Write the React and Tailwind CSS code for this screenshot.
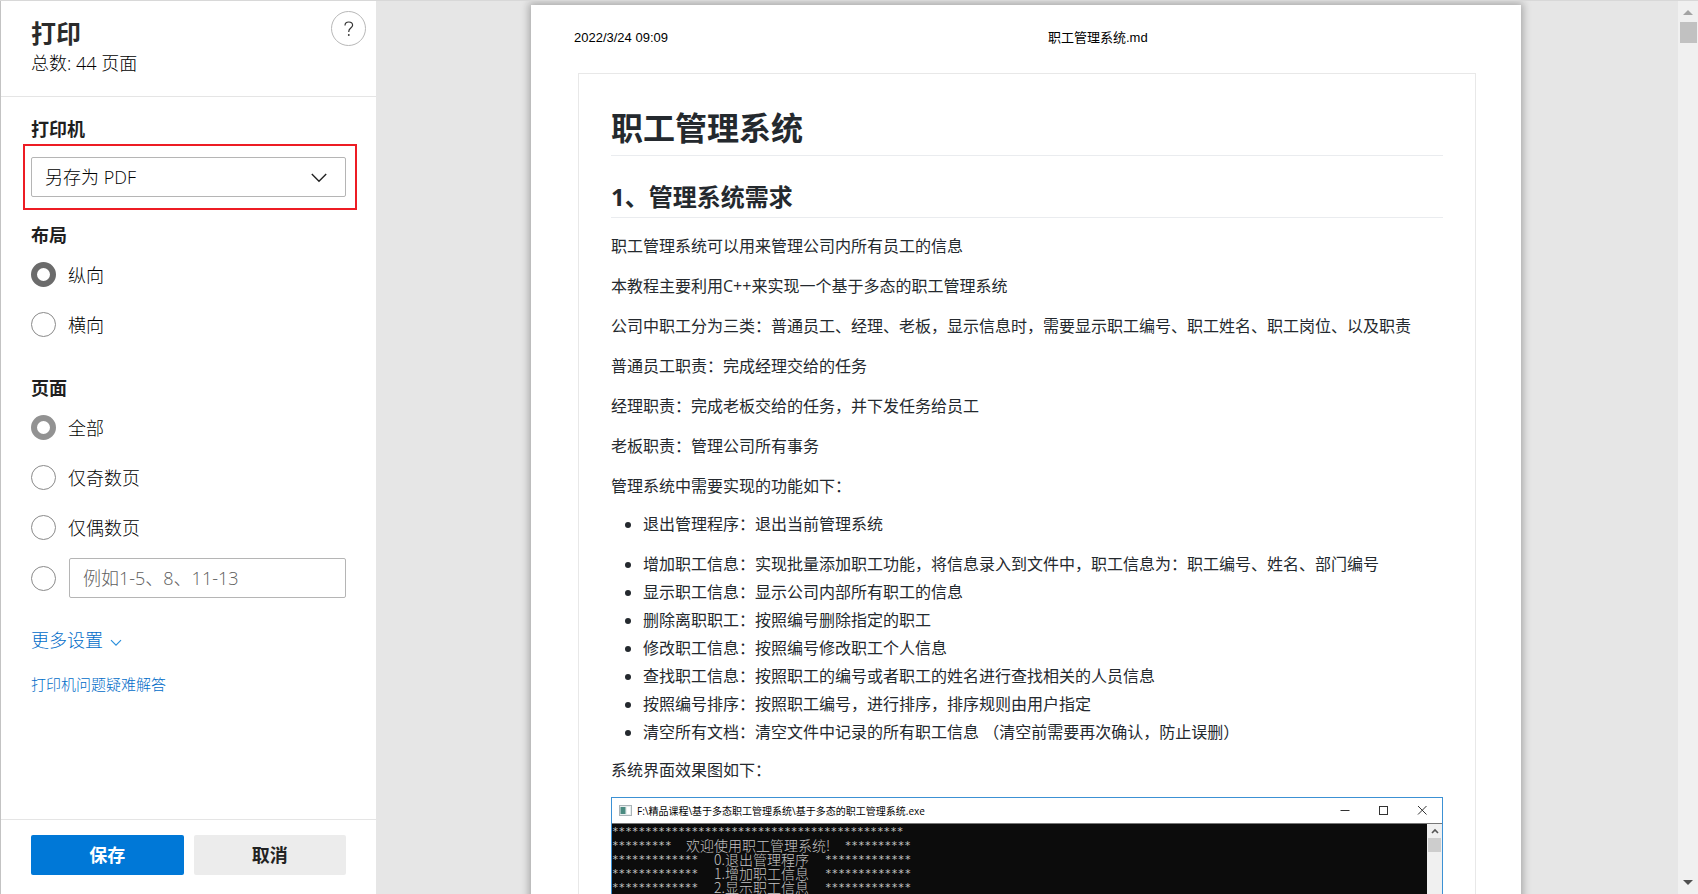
const SIDE_FONT = "font-['Open_Sans','Noto_Sans_CJK_SC',sans-serif]";

function Radio({ id, name, label, defaultChecked, tone = "border-[#6b6b6b]" }) {
  return (
    <div className="flex h-[25px] items-center gap-3">
      <input
        type="radio"
        id={id}
        name={name}
        defaultChecked={defaultChecked}
        className={`size-[25px] shrink-0 appearance-none rounded-full border bg-white ${tone}`}
      />
      <label htmlFor={id} className="text-[18px] leading-6">
        {label}
      </label>
    </div>
  );
}

function Sidebar() {
  return (
    <form
      onSubmit={(e) => e.preventDefault()}
      className={`flex w-[376px] shrink-0 flex-col border-l border-[#c3c3c3] bg-white font-light text-black ${SIDE_FONT}`}
    >
      <header className="flex h-24 shrink-0 items-start justify-between border-b border-[#e5e5e5] pl-[30px] pr-[10px] pt-[10px]">
        <div className="pt-1.5">
          <h1 className="text-[25px] font-bold leading-8 text-[#2b2b2b]">打印</h1>
          <p className="text-[18px] leading-7">总数: 44 页面</p>
        </div>
        <button
          type="button"
          aria-label="帮助"
          className="flex size-[35px] items-center justify-center rounded-full border border-[#b8b8b8]"
        >
          <svg width="10" height="16" viewBox="0 0 10 16" fill="none" stroke="#333" strokeWidth="1.2">
            <path d="M1 4.6C1 2.3 2.6 1 4.8 1S8.6 2.4 8.6 4.3C8.6 6.9 4.8 7.3 4.8 10.2V11" />
            <circle cx="4.8" cy="14" r="0.9" fill="#333" stroke="none" />
          </svg>
        </button>
      </header>

      <div className="flex min-h-0 flex-1 flex-col overflow-hidden px-[30px] pt-5">
        <label htmlFor="printer" className="text-[18px] font-bold leading-6 text-[#1f1f1f]">
          打印机
        </label>
        <div className="-ml-2 -mr-[11px] mt-[3px] border-2 border-[#ed1c24] py-[11px] pl-1.5 pr-[9px]">
          <div className="grid items-center">
            <select
              id="printer"
              className="col-start-1 row-start-1 h-10 w-full appearance-none rounded-xs border border-[#b5b5b5] bg-white pl-[13px] text-[18px]"
            >
              <option>另存为 PDF</option>
            </select>
            <svg
              className="pointer-events-none col-start-1 row-start-1 mr-[19px] mt-0.5 justify-self-end"
              width="16"
              height="10"
              viewBox="0 0 16 10"
              fill="none"
              stroke="#222"
              strokeWidth="1.4"
            >
              <path d="M0.8 1L8 8.2L15.2 1" />
            </svg>
          </div>
        </div>

        <fieldset className="mt-[13px]">
          <legend className="text-[18px] font-bold leading-6 text-[#1f1f1f]">布局</legend>
          <div className="mt-[15px] flex flex-col gap-[25px]">
            <Radio id="portrait" name="layout" label="纵向" defaultChecked tone="border-[#767676] checked:border-[6px] checked:border-[#6b6b6b]" />
            <Radio id="landscape" name="layout" label="横向" tone="border-[#8a8a8a] checked:border-[6px]" />
          </div>
        </fieldset>

        <fieldset className="mt-[39px]">
          <legend className="text-[18px] font-bold leading-6 text-[#1f1f1f]">页面</legend>
          <div className="mt-[15px] flex flex-col gap-[25px]">
            <Radio id="all" name="pages" label="全部" defaultChecked tone="border-[#8a8a8a] checked:border-[6px] checked:border-[#929292]" />
            <Radio id="odd" name="pages" label="仅奇数页" tone="border-[#8a8a8a] checked:border-[6px]" />
            <Radio id="even" name="pages" label="仅偶数页" tone="border-[#8a8a8a] checked:border-[6px]" />
          </div>
          <div className="mt-[18px] flex items-center gap-[13px]">
            <input
              type="radio"
              name="pages"
              aria-label="自定义页面范围"
              className="size-[25px] shrink-0 appearance-none rounded-full border border-[#8a8a8a] bg-white checked:border-[6px]"
            />
            <input
              type="text"
              aria-label="页面范围"
              placeholder="例如1-5、8、11-13"
              className="h-10 min-w-0 flex-1 rounded-xs border border-[#b5b5b5] px-[13px] text-[18px] placeholder:text-[#606060]"
            />
          </div>
        </fieldset>

        <button type="button" className="mt-[30px] flex items-center gap-[7px] self-start text-[18px] leading-6 text-[#006cc8]">
          更多设置
          <svg className="mt-1.5" width="12" height="8" viewBox="0 0 12 8" fill="none" stroke="#2b8fdc" strokeWidth="1.2">
            <path d="M1 1.2L6 6.2L11 1.2" />
          </svg>
        </button>
        <a href="#troubleshoot" className="mt-5 self-start text-[15px] leading-6 text-[#006cc8]">
          打印机问题疑难解答
        </a>
      </div>

      <footer className="flex shrink-0 gap-2.5 border-t border-[#e5e5e5] px-[30px] pb-[19px] pt-[15px]">
        <button type="submit" className="h-10 flex-1 rounded-xs bg-[#0078d7] text-[18px] font-bold text-white">
          保存
        </button>
        <button type="button" className="h-10 flex-1 rounded-xs bg-[#ececec] text-[18px] font-bold text-[#222]">
          取消
        </button>
      </footer>
    </form>
  );
}

const INTRO = [
  "职工管理系统可以用来管理公司内所有员工的信息",
  "本教程主要利用C++来实现一个基于多态的职工管理系统",
  "公司中职工分为三类：普通员工、经理、老板，显示信息时，需要显示职工编号、职工姓名、职工岗位、以及职责",
  "普通员工职责：完成经理交给的任务",
  "经理职责：完成老板交给的任务，并下发任务给员工",
  "老板职责：管理公司所有事务",
  "管理系统中需要实现的功能如下：",
];

const FEATURES = [
  "退出管理程序：退出当前管理系统",
  "增加职工信息：实现批量添加职工功能，将信息录入到文件中，职工信息为：职工编号、姓名、部门编号",
  "显示职工信息：显示公司内部所有职工的信息",
  "删除离职职工：按照编号删除指定的职工",
  "修改职工信息：按照编号修改职工个人信息",
  "查找职工信息：按照职工的编号或者职工的姓名进行查找相关的人员信息",
  "按照编号排序：按照职工编号，进行排序，排序规则由用户指定",
  "清空所有文档：清空文件中记录的所有职工信息 （清空前需要再次确认，防止误删）",
];

const CONSOLE_ROWS = [
  { left: 9, text: "欢迎使用职工管理系统!", right: 10 },
  { left: 13, text: "0.退出管理程序", right: 13 },
  { left: 13, text: "1.增加职工信息", right: 13 },
  { left: 13, text: "2.显示职工信息", right: 13 },
  { left: 13, text: "3.删除离职职工", right: 13 },
];

function Stars({ count }) {
  return <span className="pt-0.5 font-['DejaVu_Sans_Mono',monospace] text-[11px] leading-3">{"*".repeat(count)}</span>;
}

function ConsoleWindow() {
  return (
    <figure className="border border-[#3c91d4] bg-white">
      <div className="flex h-[26px] items-center border-b border-[#777] pl-[7px] pr-[14px]">
        <svg width="13" height="11" viewBox="0 0 13 11">
          <rect x="0.5" y="0.5" width="12" height="10" fill="#e8eeee" stroke="#aab4b8" />
          <rect x="1.5" y="2" width="5" height="7" fill="#4a8a80" />
          <rect x="8" y="2" width="3" height="7" fill="#fff" />
        </svg>
        <span className="ml-[5px] flex-1 text-[10px] leading-4 text-black">
          F:\精品课程\基于多态职工管理系统\基于多态的职工管理系统.exe
        </span>
        <svg width="88" height="11" viewBox="0 0 88 11" fill="none" stroke="#333">
          <path d="M0.5 5.5H9.5" />
          <rect x="39.5" y="1.5" width="8" height="8" />
          <path d="M78 1L86.5 9.5M86.5 1L78 9.5" />
        </svg>
      </div>
      <div className="flex h-[140px] bg-[#0c0c0c] text-[#c4c4c4]">
        <div className="w-[299px] font-['Noto_Sans_CJK_SC',sans-serif] text-[14px] font-light leading-[14px]">
          <div className="flex h-[14px]">
            <Stars count={44} />
          </div>
          {CONSOLE_ROWS.map((row) => (
            <div key={row.text} className="flex h-[14px] justify-between">
              <Stars count={row.left} />
              <span>{row.text}</span>
              <Stars count={row.right} />
            </div>
          ))}
        </div>
        <div className="ml-auto flex w-[15px] flex-col items-center bg-[#f0f0f0] pt-1">
          <svg width="8" height="6" viewBox="0 0 8 6" fill="none" stroke="#555" strokeWidth="1.6">
            <path d="M1 5L4 2L7 5" />
          </svg>
          <div className="mt-1 h-[14px] w-[13px] bg-[#cdcdcd]" />
        </div>
      </div>
    </figure>
  );
}

function Paper() {
  return (
    <article className="w-[990px] max-w-full bg-white pl-[47px] pr-[45px] pt-[23px] shadow-[0_0_8px_2px_rgba(0,0,0,0.28)]">
      <header className="grid grid-cols-2 font-['Liberation_Sans','Noto_Sans_CJK_SC',sans-serif] text-[13px] leading-5 text-black">
        <time className="-ml-1">2022/3/24 09:09</time>
        <span className="pl-[21px]">职工管理系统.md</span>
      </header>
      <div className="mt-[25px] border border-[#e8e8e8] px-8 pt-8 font-['Open_Sans','Noto_Sans_CJK_SC',sans-serif] text-[16px] leading-6 text-[#24292e]">
        <h1 className="border-b border-[#eaecef] pb-1.5 text-[32px] font-bold leading-[43px]">职工管理系统</h1>
        <h2 className="mt-6 border-b border-[#eaecef] pb-1 text-[24px] font-bold leading-[33px]">1、管理系统需求</h2>
        <div className="mt-4 flex flex-col gap-4">
          {INTRO.map((t) => (
            <p key={t}>{t}</p>
          ))}
        </div>
        <ul className="mt-3.5 list-disc pl-8">
          {FEATURES.map((t) => (
            <li key={t} className="mt-1 first:mt-0 first:mb-4">
              {t}
            </li>
          ))}
        </ul>
        <p className="mb-[15px] mt-3.5">系统界面效果图如下：</p>
        <ConsoleWindow />
      </div>
    </article>
  );
}

function Scrollbar() {
  return (
    <div aria-hidden="true" className="flex w-5 shrink-0 flex-col items-center justify-between bg-[#f0f0f0]">
      <div className="flex flex-col items-center pt-[9px]">
        <svg width="10" height="5" viewBox="0 0 10 5" fill="#a3a3a3">
          <path d="M5 0L10 5H0Z" />
        </svg>
        <div className="mt-[7px] h-[21px] w-[17px] bg-[#c1c1c1]" />
      </div>
      <svg className="mb-[9px]" width="10" height="5" viewBox="0 0 10 5" fill="#505050">
        <path d="M0 0H10L5 5Z" />
      </svg>
    </div>
  );
}

export default function App() {
  return (
    <div className="flex h-screen overflow-hidden border-t border-[#d8d8d8] bg-[#e6e6e6]">
      <Sidebar />
      <main className="flex min-w-0 flex-1 items-start justify-center overflow-hidden pr-0.5 pt-1">
        <Paper />
      </main>
      <Scrollbar />
    </div>
  );
}
